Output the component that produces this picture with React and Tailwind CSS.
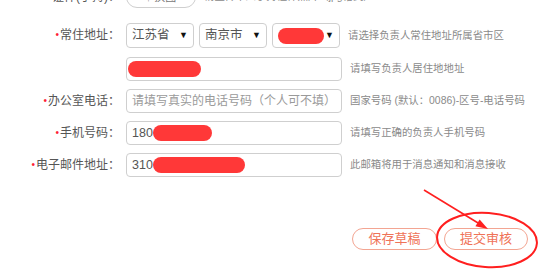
import React from "react";

const Dot = () => <span className="text-[#f23] text-[10px] mr-[1px] relative top-[-1px]">•</span>;

function Label({ children }) {
  return (
    <div className="w-[120px] shrink-0 text-right text-[12px] leading-[24px] text-[#555]">
      <Dot />
      {children}：
    </div>
  );
}

function Hint({ children }) {
  return <div className="ml-[8px] text-[10.4px] leading-[24px] text-[#8a8a8a] whitespace-nowrap">{children}</div>;
}

function Blob({ w, h = 15 }) {
  return (
    <span
      className="inline-block align-middle bg-[#ff3838] rounded-[8px] blur-[0.6px]"
      style={{ width: w, height: h }}
    />
  );
}

function Select({ children }) {
  return (
    <div className="w-[68px] h-[25px] border border-[#cfcfcf] rounded-[4px] flex items-center justify-between pl-[5px] pr-[5px] text-[12.5px] text-[#555] bg-white">
      <span className="flex items-center">{children}</span>
      <span className="text-[9px] text-[#111]">▼</span>
    </div>
  );
}

function Input({ children, placeholder }) {
  return (
    <div className="w-[216px] h-[24px] border border-[#cfcfcf] rounded-[4px] flex items-center pl-[5px] text-[12.5px] text-[#555] bg-white overflow-hidden whitespace-nowrap">
      {placeholder ? <span className="text-[#9a9a9a] text-[12px]">{placeholder}</span> : children}
    </div>
  );
}

export default function App() {
  return (
    <div className="relative w-[558px] h-[278px] overflow-hidden bg-white font-['Liberation_Sans','Noto_Sans_CJK_SC',sans-serif]">
      <div className="flex flex-col mt-[-13px]">
        <div className="flex items-center h-[20px]">
          <Label>证件(手持)</Label>
          <div className="ml-[6px] w-[70px] h-[22px] border border-[#cfcfcf] rounded-full flex items-center justify-center text-[11px] text-[#777]">
            ↑ 换图
          </div>
          <Hint>请上传本人手持证件照片（jpg格式）</Hint>
        </div>

        <div className="flex items-center h-[25px] mt-[16px]">
          <Label>常住地址</Label>
          <div className="ml-[6px] flex gap-[5px]">
            <Select>江苏省</Select>
            <Select>南京市</Select>
            <Select>
              <Blob w={46} h={16} />
            </Select>
          </div>
          <Hint>请选择负责人常住地址所属省市区</Hint>
        </div>

        <div className="flex items-center h-[24px] mt-[9px]">
          <div className="w-[120px] shrink-0" />
          <div className="ml-[6px]">
            <Input>
              <span className="ml-[-4px]"><Blob w={73} h={16} /></span>
            </Input>
          </div>
          <Hint>请填写负责人居住地地址</Hint>
        </div>

        <div className="flex items-center h-[24px] mt-[8px]">
          <Label>办公室电话</Label>
          <div className="ml-[6px]">
            <Input placeholder="请填写真实的电话号码（个人可不填）" />
          </div>
          <Hint>国家号码 (默认：0086)-区号-电话号码</Hint>
        </div>

        <div className="flex items-center h-[24px] mt-[8px]">
          <Label>手机号码</Label>
          <div className="ml-[6px]">
            <Input>
              <span>180</span>
              <Blob w={59} h={16} />
            </Input>
          </div>
          <Hint>请填写正确的负责人手机号码</Hint>
        </div>

        <div className="flex items-center h-[24px] mt-[8px]">
          <Label>电子邮件地址</Label>
          <div className="ml-[6px]">
            <Input>
              <span>310</span>
              <Blob w={92} h={16} />
            </Input>
          </div>
          <Hint>此邮箱将用于消息通知和消息接收</Hint>
        </div>

        <div className="flex justify-end gap-[7px] pr-[30px] mt-[51px]">
          <button className="w-[85px] h-[22px] rounded-full border border-[#f3a592] text-[#ef7358] text-[13px] leading-[20px] bg-white">
            保存草稿
          </button>
          <button className="w-[84px] h-[22px] rounded-full border border-[#f3a592] text-[#ef7358] text-[13px] leading-[20px] bg-white">
            提交审核
          </button>
        </div>
      </div>

      <svg className="absolute inset-0 pointer-events-none" width="558" height="278" viewBox="0 0 558 278">
        <line x1="424" y1="190" x2="483" y2="226" stroke="#ff2020" strokeWidth="1.6" />
        <polygon points="488,229 475.4,226.2 479.6,219.4" fill="#ff2020" />
        <ellipse cx="487" cy="240" rx="50" ry="27" fill="none" stroke="#ff1f1f" strokeWidth="2" transform="rotate(4 487 240)" />
      </svg>
    </div>
  );
}
